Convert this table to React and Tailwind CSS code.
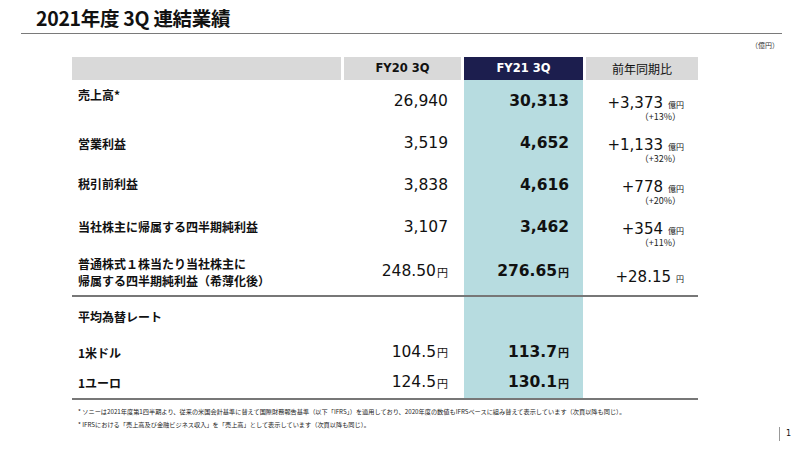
import React from "react";

const jp = "font-['Noto_Sans_CJK_JP',sans-serif]";
const num = "font-['DejaVu_Sans','Noto_Sans_CJK_JP',sans-serif]";

const rows = [
  { label: ["売上高*"], lpad: "pb-[14px]", fy20: "26,940", fy21: "30,313", diff: "+3,373", unit: "億円", pct: "（+13%）", h: "h-[43px]" },
  { label: ["営業利益"], lpad: "pb-[2px]", fy20: "3,519", fy21: "4,652", diff: "+1,133", unit: "億円", pct: "（+32%）", h: "h-[42px]" },
  { label: ["税引前利益"], lpad: "pb-[6px]", fy20: "3,838", fy21: "4,616", diff: "+778", unit: "億円", pct: "（+20%）", h: "h-[42px]" },
  { label: ["当社株主に帰属する四半期純利益"], lpad: "pb-[4px]", fy20: "3,107", fy21: "3,462", diff: "+354", unit: "億円", pct: "（+11%）", h: "h-[42px]" },
  { label: ["普通株式１株当たり当社株主に", "帰属する四半期純利益（希薄化後）"], lpad: "", fy20: "248.50", fy21: "276.65", yen: true, diff: "+28.15", unit: "円", pct: null, h: "h-[46px]" },
];

const fx = [
  { label: "1米ドル", fy20: "104.5", fy21: "113.7", h: "h-[31px]" },
  { label: "1ユーロ", fy20: "124.5", fy21: "130.1", h: "h-[30px]" },
];

function Yen({ bold }) {
  return <span className={`${jp} text-[11px] ${bold ? "font-bold" : ""} ml-[1px]`}>円</span>;
}

export default function App() {
  return (
    <div className={`w-[800px] h-[450px] bg-white text-[#111] ${jp} flex flex-col`}>
      {/* title */}
      <div className="ml-[21px] w-[761px] h-[34px] border-b border-[#7a7a7a] flex items-end pl-[15px] pb-[1px]">
        <h1 className="text-[19.5px] font-bold leading-[28px] tracking-[-0.3px]">2021年度 3Q 連結業績</h1>
      </div>
      <div className="h-[23px] flex items-center justify-end pr-[21px] text-[7px] text-[#333]">（億円）</div>

      {/* table */}
      <div className="ml-[72px] w-[626px] grid grid-cols-[269px_117px_119px_112px] gap-x-[3px]">
        <div className="h-[23px] bg-[#d9d9d9]" />
        <div className={`h-[23px] bg-[#d9d9d9] flex items-center justify-center ${num} font-bold text-[11.5px]`}>FY20 3Q</div>
        <div className={`h-[23px] bg-[#1c1e4e] text-white flex items-center justify-center ${num} font-bold text-[11.5px]`}>FY21 3Q</div>
        <div className="h-[23px] bg-[#d9d9d9] flex items-center justify-center text-[12px]">前年同期比</div>

        {rows.map((r) => (
          <React.Fragment key={r.fy20}>
            <div className={`${r.h} flex flex-col justify-center pl-[6px] ${r.lpad} text-[12px] font-bold leading-[17px]`}>
              {r.label.map((l) => (
                <span key={l}>{l}</span>
              ))}
            </div>
            <div className={`${r.h} flex items-center justify-end pr-[13px] ${num} text-[15.5px]`}>
              <span>{r.fy20}</span>
              {r.yen && <Yen />}
            </div>
            <div className={`${r.h} bg-[#b7dce0] flex items-center justify-end pr-[14px] ${num} text-[15.5px] font-bold`}>
              <span>{r.fy21}</span>
              {r.yen && <Yen bold />}
            </div>
            <div className={`${r.h} flex items-center justify-end pr-[14px]`}>
              <div className={`flex flex-col items-end ${r.pct ? "pt-[10px]" : "pt-[6px]"}`}>
                <div className="flex items-baseline h-[19px]">
                  <span className={`${num} text-[15px]`}>{r.diff}</span>
                  <span className="text-[8px] ml-[5px]">{r.unit}</span>
                </div>
                {r.pct && <span className="text-[9px] leading-[11px] mr-[3px] text-[#222]">{r.pct}</span>}
              </div>
            </div>
          </React.Fragment>
        ))}

        <div className="col-span-4 h-[2px] bg-[#777]" />

        <div className="h-[40px] flex items-center pl-[6px] text-[12px] font-bold">平均為替レート</div>
        <div className="h-[40px]" />
        <div className="h-[40px] bg-[#b7dce0]" />
        <div className="h-[40px]" />

        {fx.map((r) => (
          <React.Fragment key={r.label}>
            <div className={`${r.h} flex items-center pl-[6px] text-[12px] font-bold`}>{r.label}</div>
            <div className={`${r.h} flex items-center justify-end pr-[13px] ${num} text-[15.5px]`}>
              <span>{r.fy20}</span>
              <Yen />
            </div>
            <div className={`${r.h} bg-[#b7dce0] flex items-center justify-end pr-[14px] ${num} text-[15.5px] font-bold`}>
              <span>{r.fy21}</span>
              <Yen bold />
            </div>
            <div className={r.h} />
          </React.Fragment>
        ))}

        <div className="col-span-4 h-[2px] bg-[#777]" />
      </div>

      {/* footer */}
      <div className="flex items-end justify-between">
        <div className="pl-[78px] pt-[5px] text-[6.2px] leading-[13px] text-[#222]">
          <p>* ソニーは2021年度第1四半期より、従来の米国会計基準に替えて国際財務報告基準（以下「IFRS」）を適用しており、2020年度の数値もIFRSベースに組み替えて表示しています（次頁以降も同じ）。</p>
          <p>* IFRSにおける「売上高及び金融ビジネス収入」を「売上高」として表示しています（次頁以降も同じ）。</p>
        </div>
        <div className="flex items-center pr-[9px] mb-[-10px]">
          <div className="w-px h-[14px] bg-[#999] mr-[6px]" />
          <span className={`${num} text-[8px]`}>1</span>
        </div>
      </div>
    </div>
  );
}
